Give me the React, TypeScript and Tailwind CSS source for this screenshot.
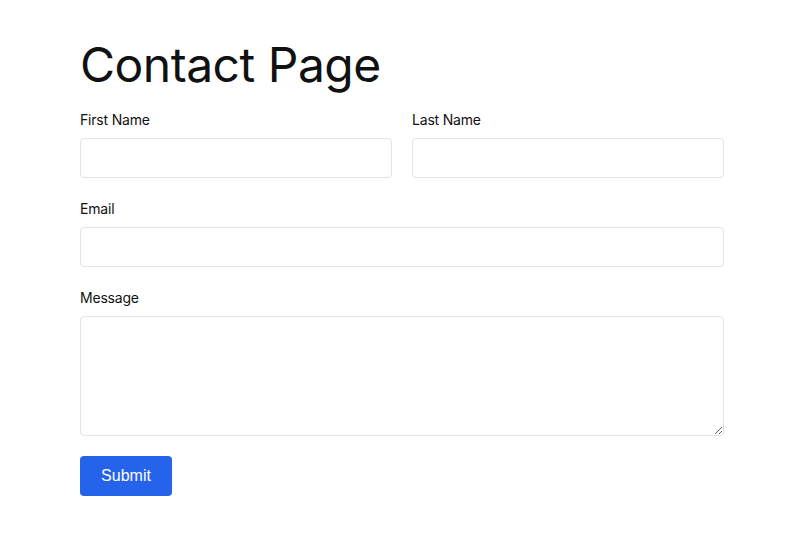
export default function App() {
  return (
    <div className="min-h-screen bg-white font-['Inter','Noto_Sans',sans-serif] text-[#111]">
      <div className="ml-20 w-[644px] pt-[35px]">
        <h1 className="text-[48px] leading-[60px] tracking-[-0.5px] font-normal">
          Contact Page
        </h1>
        <form className="mt-[15px] flex flex-col gap-[21px]">
          <div className="grid grid-cols-2 gap-5">
            <div className="flex flex-col gap-2">
              <label className="text-sm leading-5 tracking-[-0.2px]">First Name</label>
              <input className="h-10 rounded border border-[#e2e2e2] px-3 text-sm outline-none" />
            </div>
            <div className="flex flex-col gap-2">
              <label className="text-sm leading-5 tracking-[-0.2px]">Last Name</label>
              <input className="h-10 rounded border border-[#e2e2e2] px-3 text-sm outline-none" />
            </div>
          </div>
          <div className="flex flex-col gap-2">
            <label className="text-sm leading-5 tracking-[-0.2px]">Email</label>
            <input className="h-10 rounded border border-[#e2e2e2] px-3 text-sm outline-none" />
          </div>
          <div className="flex flex-col gap-2">
            <label className="text-sm leading-5 tracking-[-0.2px]">Message</label>
            <textarea className="h-[120px] rounded border border-[#e2e2e2] px-3 py-2 text-sm outline-none" />
          </div>
          <div className="-mt-px">
            <button
              type="button"
              className="h-10 w-[92px] rounded bg-[#2563eb] font-['Liberation_Sans',Arial,sans-serif] text-base font-medium text-white"
            >
              Submit
            </button>
          </div>
        </form>
      </div>
    </div>
  );
}
